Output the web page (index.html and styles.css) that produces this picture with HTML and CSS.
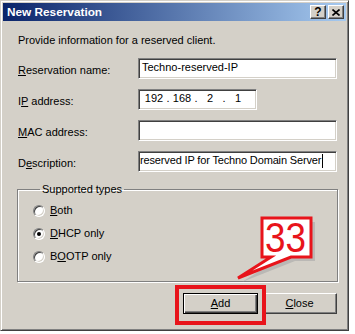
FILE: index.html
```html
<!DOCTYPE html>
<html lang="en">
<head>
  <meta charset="UTF-8">
  <title>New Reservation</title>
  <link rel="stylesheet" href="styles.css">
</head>
<body>
  <div class="window">
    <div class="titlebar">
      <span class="title">New Reservation</span>
      <div class="caption-buttons">
        <span class="cbtn cbtn-help">?</span>
        <span class="cbtn">
          <svg width="8" height="7" viewBox="0 0 8 7">
            <path d="M0.5 0.5 L7.5 6.5 M7.5 0.5 L0.5 6.5" stroke="#000" stroke-width="1.6" fill="none"/>
          </svg>
        </span>
      </div>
    </div>

    <div class="content">
      <p class="intro">Provide information for a reserved client.</p>

      <div class="form">
        <label class="label"><u>R</u>eservation name:</label>
        <div class="field">Techno-reserved-IP</div>

        <label class="label">I<u>P</u> address:</label>
        <div class="field field-ip">
          <span class="octet">192</span><span class="dot">.</span>
          <span class="octet">168</span><span class="dot">.</span>
          <span class="octet">2</span><span class="dot">.</span>
          <span class="octet">1</span>
        </div>

        <label class="label"><u>M</u>AC address:</label>
        <div class="field"></div>

        <label class="label">D<u>e</u>scription:</label>
        <div class="field field-desc">reserved IP for Techno Domain Server<span class="caret"></span></div>
      </div>

      <fieldset class="group">
        <legend>Supported types</legend>
        <div class="radio-row"><span class="radio"></span><span><u>B</u>oth</span></div>
        <div class="radio-row"><span class="radio radio-checked"></span><span><u>D</u>HCP only</span></div>
        <div class="radio-row"><span class="radio"></span><span>B<u>O</u>OTP only</span></div>
      </fieldset>

      <div class="actions">
        <button class="btn btn-default"><u>A</u>dd</button>
        <button class="btn"><u>C</u>lose</button>
      </div>
    </div>

    <!-- annotation overlay -->
    <div class="highlight"></div>
    <svg class="callout" width="92" height="74" viewBox="230 212 92 74">
      <path d="M266 222 H315 V261 H295 L242 282 L275 261 H266 Z" fill="#a8a8a8" opacity="0.6"/>
      <path d="M262 218 H311 V257 H291 L238 278 L271 257 H262 Z" fill="#fff" stroke="#E8141B" stroke-width="3" stroke-linejoin="miter"/>
      <text x="265" y="252" textLength="41" lengthAdjust="spacingAndGlyphs" class="callout-text">33</text>
    </svg>
  </div>
</body>
</html>
```

FILE: styles.css
```css
* {
  box-sizing: border-box;
}

body {
  margin: 0;
  background: #fff;
  font-family: "Liberation Sans", Arial, sans-serif;
  font-size: 11px;
  line-height: 13px;
  color: #000;
}

.window {
  position: relative;
  width: 349px;
  height: 331px;
  padding: 2px;
  background: #D4D0C8;
  border: 1px solid;
  border-color: #D4D0C8 #404040 #404040 #D4D0C8;
  box-shadow: inset 1px 1px #fff, inset -1px -1px #808080;
}

.titlebar {
  display: flex;
  align-items: center;
  justify-content: space-between;
  height: 18px;
  padding: 0 2px 0 4px;
  background: linear-gradient(to right, #0A246A, #A6CAF0);
}

.title {
  color: #fff;
  font-weight: bold;
  font-size: 11.8px;
}

.caption-buttons {
  display: flex;
  gap: 2px;
}

.cbtn {
  display: flex;
  align-items: center;
  justify-content: center;
  width: 16px;
  height: 14px;
  background: #D4D0C8;
  border: 1px solid;
  border-color: #fff #404040 #404040 #fff;
  box-shadow: inset -1px -1px #808080;
}

.cbtn-help {
  font-weight: bold;
  font-size: 12px;
}

.content {
  padding: 13px 9px 0 15px;
}

.intro {
  margin: 0;
}

.form {
  display: grid;
  grid-template-columns: 120px 199px;
  grid-auto-rows: 21px;
  row-gap: 10px;
  margin-top: 11px;
}

.label {
  padding-top: 6px;
}

.field {
  display: flex;
  align-items: center;
  background: #fff;
  border: 1px solid;
  border-color: #808080 #fff #fff #808080;
  box-shadow: inset 1px 1px #404040, inset -1px -1px #D4D0C8;
  padding: 0 0 2px 3px;
  white-space: nowrap;
  overflow: hidden;
}

.field-ip {
  width: 119px;
  padding-left: 4px;
}

.octet {
  width: 22px;
  text-align: center;
}

.dot {
  width: 6px;
  text-align: center;
}

.field-desc {
  padding-left: 1px;
  letter-spacing: -0.15px;
}

.caret {
  display: inline-block;
  width: 1px;
  height: 14px;
  margin-left: 1px;
  background: #000;
}

.group {
  margin: 11px 0 0 -1px;
  width: 321px;
  padding: 3px 0 13px 15px;
  border: 1px solid #808080;
  box-shadow: inset 1px 1px #fff, 1px 1px #fff;
}

.group legend {
  margin-left: 7px;
  padding: 0 2px;
}

.radio-row {
  display: flex;
  align-items: center;
  gap: 5px;
  height: 23px;
}

.radio {
  position: relative;
  width: 12px;
  height: 12px;
  border-radius: 50%;
  background: #fff;
  border: 1px solid;
  border-color: #808080 #fff #fff #808080;
  box-shadow: inset 1px 1px #404040, inset -1px -1px #D4D0C8;
}

.radio-checked::after {
  content: "";
  position: absolute;
  left: 3px;
  top: 3px;
  width: 4px;
  height: 4px;
  border-radius: 50%;
  background: #000;
}

.actions {
  display: flex;
  justify-content: flex-end;
  gap: 4px;
  margin-top: 11px;
}

.btn {
  width: 75px;
  height: 21px;
  padding: 0;
  font: inherit;
  color: #000;
  background: #D4D0C8;
  border: 1px solid;
  border-color: #fff #404040 #404040 #fff;
  box-shadow: inset -1px -1px #808080;
}

.btn-default {
  border: 1px solid #000;
  box-shadow: inset 1px 1px #fff, inset -1px -1px #404040, inset -2px -2px #808080;
}

.highlight {
  position: absolute;
  left: 174px;
  top: 284px;
  width: 91px;
  height: 40px;
  border: 4px solid #E8141B;
}

.callout {
  position: absolute;
  left: 229px;
  top: 211px;
}

.callout-text {
  font-family: "Liberation Sans", Arial, sans-serif;
  font-size: 42px;
  fill: #E8141B;
}
```
